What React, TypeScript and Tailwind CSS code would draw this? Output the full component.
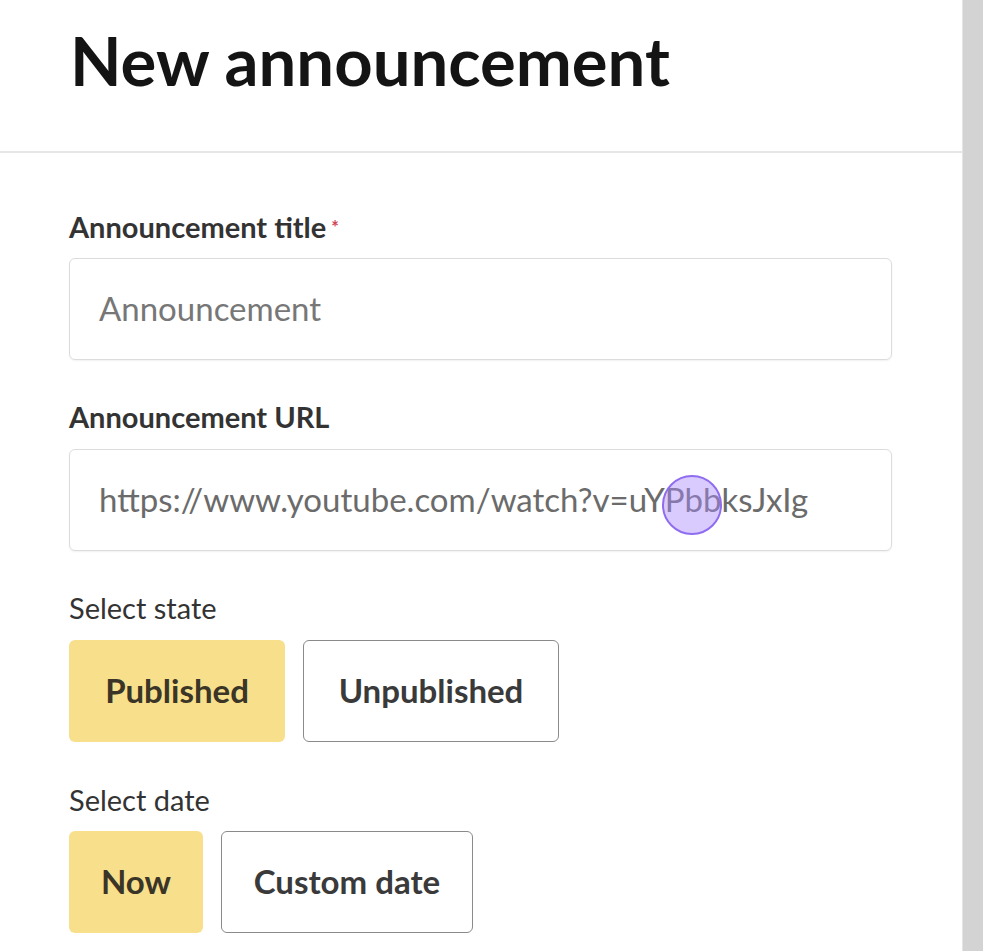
import React from "react";

const font = { fontFamily: "Lato, 'Open Sans', sans-serif" };

export default function App() {
  return (
    <div className="flex h-[951px] w-[983px] bg-white" style={font}>
      <div className="relative flex w-[962px] flex-col">
        <div className="h-[153px] border-b-2 border-[#e6e6e6] pl-[70px] pt-[21px]">
          <h1 className="text-[67px] font-bold leading-[78px] text-[#141414]">New announcement</h1>
        </div>
        <div className="flex flex-col pl-[69px] pr-[70px] pt-[58px]">
          <label className="h-[32px] text-[29px] font-bold leading-[32px] text-[#333]">
            Announcement title<span className="ml-[5px] align-top text-[18px] text-[#d0455a]">*</span>
          </label>
          <div className="mt-[15px] flex h-[102px] items-center rounded-[6px] border border-[#dcdcdc] px-[29px] text-[33px] text-[#777] shadow-[0_1px_2px_rgba(0,0,0,0.06)]">
            Announcement
          </div>
          <label className="mt-[41px] h-[32px] text-[29px] font-bold leading-[32px] text-[#333]">
            Announcement URL
          </label>
          <div className="mt-[16px] flex h-[102px] items-center rounded-[6px] border border-[#dcdcdc] px-[29px] text-[33px] text-[#6b6b6b] shadow-[0_1px_2px_rgba(0,0,0,0.06)]">
            https://www.youtube.com/watch?v=uYPbbksJxIg
          </div>
          <div className="mt-[41px] h-[32px] text-[29px] leading-[32px] text-[#333]">Select state</div>
          <div className="mt-[16px] flex gap-[18px]">
            <button className="h-[102px] w-[216px] rounded-[6px] bg-[#f8df8c] text-[33px] font-bold text-[#3a3526]">
              Published
            </button>
            <button className="h-[102px] w-[256px] rounded-[6px] border border-[#8a8a8a] bg-white text-[33px] font-bold text-[#3a3a3a]">
              Unpublished
            </button>
          </div>
          <div className="mt-[42px] h-[32px] text-[29px] leading-[32px] text-[#333]">Select date</div>
          <div className="mt-[15px] flex gap-[18px]">
            <button className="h-[102px] w-[134px] rounded-[6px] bg-[#f8df8c] text-[33px] font-bold text-[#3a3526]">
              Now
            </button>
            <button className="h-[102px] w-[252px] rounded-[6px] border border-[#8a8a8a] bg-white text-[33px] font-bold text-[#3a3a3a]">
              Custom date
            </button>
          </div>
        </div>
        <div className="absolute left-[662px] top-[475px] h-[60px] w-[60px] rounded-full border-2 border-[#8f6cf0] bg-[rgba(170,140,250,0.45)]" />
      </div>
      <div className="w-[21px] border-l border-[#e4e4e4] bg-[#d3d3d3]" />
    </div>
  );
}
